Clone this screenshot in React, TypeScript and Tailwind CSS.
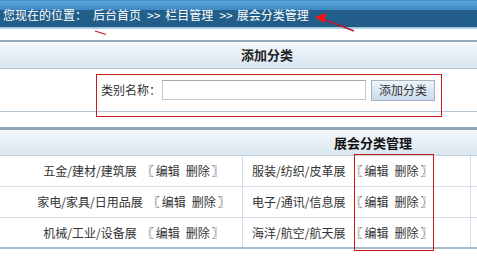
const rows = [
  ["五金/建材/建筑展", "服装/纺织/皮革展"],
  ["家电/家具/日用品展", "电子/通讯/信息展"],
  ["机械/工业/设备展", "海洋/航空/航天展"],
];

function Actions() {
  return (
    <span className="ml-[5px] flex items-center">
      <span className="mr-[2px]">〖</span>
      <a className="text-[#333]">编辑</a>
      <a className="ml-[6px] text-[#333]">删除</a>
      <span className="ml-[2px]">〗</span>
    </span>
  );
}

export default function App() {
  return (
    <div className="relative w-[477px] h-[257px] overflow-hidden bg-white font-['Noto_Sans_CJK_SC',sans-serif] text-[12px] text-[#333]">
      {/* 位置栏 */}
      <div className="h-[27px] bg-[linear-gradient(to_bottom,#3474ab_0px,#5aa5dc_1px,#3e89c5_10px,#22608b_10px,#215d88_27px)] pl-[3px] pt-[8px] leading-[14px] text-white whitespace-nowrap flex">
        <span>您现在的位置：</span>
        <span className="ml-[6px]">后台首页</span>
        <span className="ml-[6px]">&gt;&gt;</span>
        <span className="ml-[5px]">栏目管理</span>
        <span className="ml-[6px]">&gt;&gt;</span>
        <span className="ml-[4px]">展会分类管理</span>
      </div>
      <div className="h-[2px] bg-[linear-gradient(to_bottom,#8ebbdc,#c6def0)]" />
      <div className="h-[11px]" />

      {/* 添加分类 */}
      <div className="border-t-2 border-[#8fa9be]">
        <div className="h-[27px] border-b border-[#b7c6d3] bg-[linear-gradient(to_bottom,#f3f7fb,#d9e6f0)] pl-[241px] flex items-center font-bold text-[13px] text-[#222]">
          添加分类
        </div>
        <div className="h-[43px] border-b border-[#b7c6d3] flex items-center pl-[101px]">
          <span>类别名称：</span>
          <input className="ml-[1px] w-[204px] h-[20px] border border-[#c9c9c9] border-t-[#a9a9a9] bg-white" />
          <button className="ml-[5px] w-[64px] h-[21px] border border-[#a3b3c1] bg-[linear-gradient(to_bottom,#eef4fa,#c8dbeb)] text-[12px] text-[#333] leading-none">
            添加分类
          </button>
        </div>
      </div>
      <div className="h-[15px]" />

      {/* 展会分类管理 */}
      <div className="border-t-[3px] border-[#8ca7bc]">
        <div className="h-[26px] border-b border-[#c3d1dc] bg-[linear-gradient(to_bottom,#f3f7fb,#d9e6f0)] pl-[334px] flex items-center font-bold text-[13px] text-[#111]">
          展会分类管理
        </div>
        {rows.map((r, i) => (
          <div key={i} className="h-[31px] flex border-b border-[#d3dfe8] last:border-b-2 last:border-[#a9bccb]">
            <div className="w-[243px] shrink-0 border-r border-[#d3dfe8] flex items-center justify-center pl-[25px] whitespace-nowrap">
              {r[0]}
              <Actions />
            </div>
            <div className="w-[228px] shrink-0 border-r border-[#d3dfe8] flex items-center pl-[9px] whitespace-nowrap">
              {r[1]}
              <Actions />
            </div>
            <div className="flex-1" />
          </div>
        ))}
      </div>

      {/* 标注 */}
      <div className="absolute left-[96px] top-[74px] w-[346px] h-[43px] border border-[#cc1a1a] pointer-events-none" />
      <div className="absolute left-[354px] top-[154px] w-[80px] h-[97px] border border-[#cc1a1a] pointer-events-none" />
      <svg className="absolute left-0 top-0 pointer-events-none" width="477" height="257">
        <line x1="323" y1="19" x2="354" y2="31" stroke="#c0172a" strokeWidth="1.5" />
        <polygon points="315,17 326,13 324,23" fill="#ff1010" />
        <line x1="95" y1="31" x2="106" y2="34.5" stroke="#c0172a" strokeWidth="1.3" />
      </svg>
    </div>
  );
}
